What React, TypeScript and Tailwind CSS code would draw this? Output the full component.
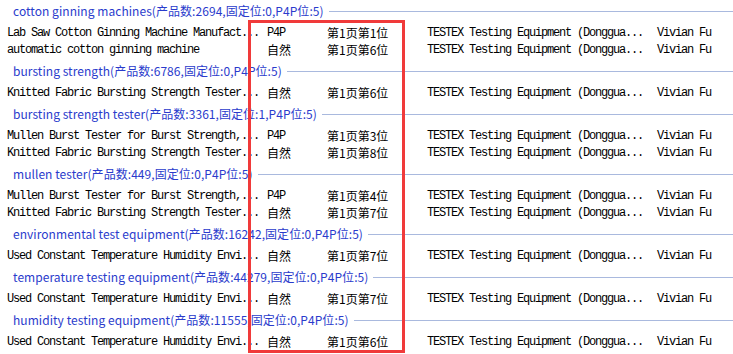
import React from 'react';

type Row = { title: string; kind: string; rank: string };
type Group = { keyword: string; stats: string; rows: Row[] };

const MONO = "font-['Liberation_Mono',monospace] text-[12px] tracking-[-1.2px] text-black";
const CJK = "font-['Noto_Sans_CJK_SC','Noto_Sans',sans-serif] text-[12px] text-black";

const COMPANY = 'TESTEX Testing Equipment (Donggua...';
const OWNER = 'Vivian Fu';

const groups: Group[] = [
  {
    keyword: 'cotton ginning machines',
    stats: '(产品数:2694,固定位:0,P4P位:5)',
    rows: [
      { title: 'Lab Saw Cotton Ginning Machine Manufact...', kind: 'P4P', rank: '第1页第1位' },
      { title: 'automatic cotton ginning machine', kind: '自然', rank: '第1页第6位' },
    ],
  },
  {
    keyword: 'bursting strength',
    stats: '(产品数:6786,固定位:0,P4P位:5)',
    rows: [{ title: 'Knitted Fabric Bursting Strength Tester...', kind: '自然', rank: '第1页第6位' }],
  },
  {
    keyword: 'bursting strength tester',
    stats: '(产品数:3361,固定位:1,P4P位:5)',
    rows: [
      { title: 'Mullen Burst Tester for Burst Strength,...', kind: 'P4P', rank: '第1页第3位' },
      { title: 'Knitted Fabric Bursting Strength Tester...', kind: '自然', rank: '第1页第8位' },
    ],
  },
  {
    keyword: 'mullen tester',
    stats: '(产品数:449,固定位:0,P4P位:5)',
    rows: [
      { title: 'Mullen Burst Tester for Burst Strength,...', kind: 'P4P', rank: '第1页第4位' },
      { title: 'Knitted Fabric Bursting Strength Tester...', kind: '自然', rank: '第1页第7位' },
    ],
  },
  {
    keyword: 'environmental test equipment',
    stats: '(产品数:16242,固定位:0,P4P位:5)',
    rows: [{ title: 'Used Constant Temperature Humidity Envi...', kind: '自然', rank: '第1页第7位' }],
  },
  {
    keyword: 'temperature testing equipment',
    stats: '(产品数:44279,固定位:0,P4P位:5)',
    rows: [{ title: 'Used Constant Temperature Humidity Envi...', kind: '自然', rank: '第1页第7位' }],
  },
  {
    keyword: 'humidity testing equipment',
    stats: '(产品数:11555,固定位:0,P4P位:5)',
    rows: [{ title: 'Used Constant Temperature Humidity Envi...', kind: '自然', rank: '第1页第6位' }],
  },
];

const App: React.FC = () => {
  return (
    <div className="relative w-[733px] h-[354px] overflow-hidden bg-white">
      {groups.map((g) => (
        <div key={g.keyword} className="pb-[2px]">
          {/* keyword header with rule */}
          <div className="flex items-center h-[24px] pb-[2px] pl-[13px]">
            <span className="font-['Noto_Sans_CJK_SC','Noto_Sans',sans-serif] text-[12px] tracking-[0.05px] text-[#2a3bcc] whitespace-nowrap leading-none">
              {g.keyword}
              {g.stats}
            </span>
            <div className="flex-1 h-px bg-[#a9b9de] ml-[5px]" />
          </div>

          {g.rows.map((r, i) => (
            <div key={i} className="flex items-center h-[17px] pl-[7px] whitespace-nowrap leading-none">
              <div className={`w-[253px] overflow-hidden ${MONO}`}>{r.title}</div>
              <div className="w-[7px]" />
              <div className={`w-[60px] ${r.kind === 'P4P' ? MONO : CJK}`}>{r.kind}</div>
              <div className={`w-[100px] ${CJK}`}>{r.rank}</div>
              <div className={`w-[230px] ${MONO}`}>{COMPANY}</div>
              <div className={MONO}>{OWNER}</div>
            </div>
          ))}
        </div>
      ))}

      {/* highlight box over the type / rank columns */}
      <div className="absolute left-[248px] top-[20px] w-[157px] h-[333px] border-[3px] border-[#f03a3a] pointer-events-none" />
    </div>
  );
};

export default App;
